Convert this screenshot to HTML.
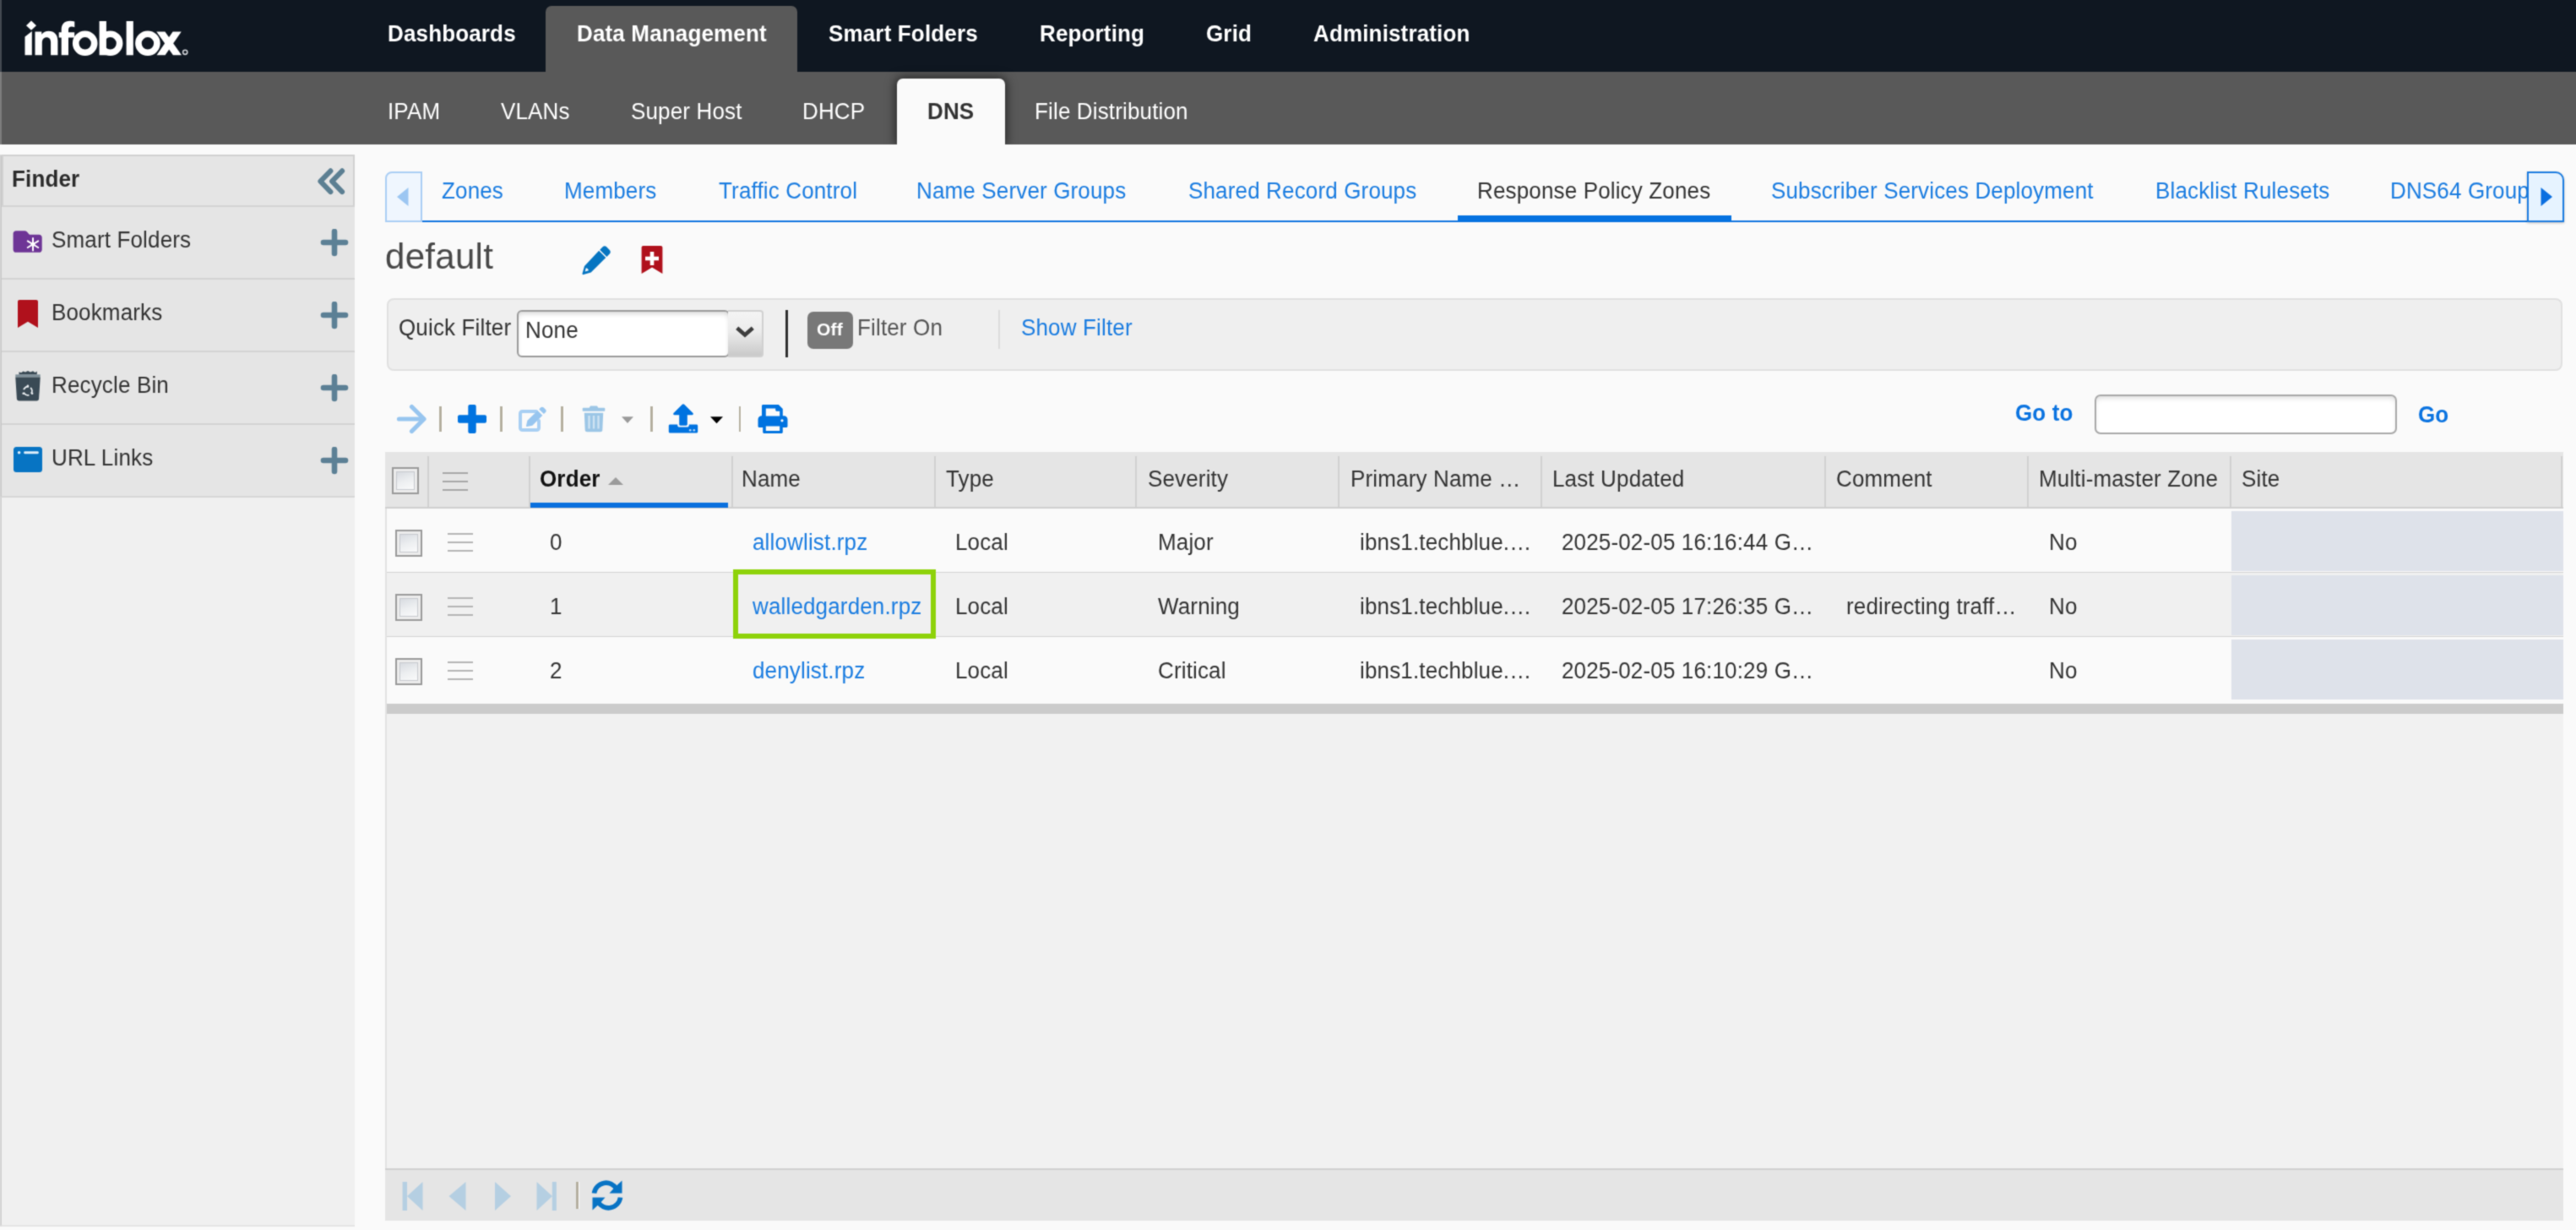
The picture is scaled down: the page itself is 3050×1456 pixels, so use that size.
<!DOCTYPE html>
<html>
<head>
<meta charset="utf-8">
<title>Infoblox - Response Policy Zones</title>
<style>
*{box-sizing:border-box;margin:0;padding:0}
html,body{width:3050px;height:1456px;overflow:hidden;background:#fafafa}
body{position:relative;font-family:"Liberation Sans",sans-serif;font-size:26px;line-height:30px;color:#333}
#wrap{position:absolute;left:0;top:0;width:3050px;height:1456px;filter:url(#soft);background:#fafafa}
.a{position:absolute}
.t{position:absolute;white-space:nowrap;font-size:26px;line-height:30px;transform:scaleY(1.09);transform-origin:0 24px;letter-spacing:.15px}
.b{font-weight:bold}
.w{color:#fff}
.lk{color:#1a7ce0}
#topbar{left:-20px;top:-20px;width:3090px;height:105px;background:#0f1721}
#subbar{left:-20px;top:85px;width:3090px;height:86px;background:#595959}
#edge{left:-20px;top:-20px;width:22px;height:191px;background:rgba(255,255,255,.22)}
#dmtab{left:646px;top:7px;width:298px;height:80px;background:#595959;border-radius:7px 7px 0 0}
#dnstab{left:1062px;top:93px;width:128px;height:78px;background:#fafafa;border-radius:7px 7px 0 0;box-shadow:0 0 12px 2px rgba(0,0,0,.55)}
#dnsmask{left:1030px;top:171px;width:200px;height:18px;background:#fafafa}
/* sidebar */
#side{left:0;top:183px;width:420px;height:1269px;background:#f0f0f0;border-left:2px solid #d0d0d0;border-bottom:2px solid #e4e4e4}
#sidelist{left:0;top:183px;width:420px;height:406px;background:#e5e5e5;border:2px solid #d6d6d6;border-left:2px solid #c9c9c9;border-right:none}
#fhead{left:2px;top:183px;width:418px;height:62px;border:2px solid #d1d1d1}
.sl{left:2px;width:418px;height:2px;background:#d3d3d3}
/* tabs */
#tabline{left:457px;top:261px;width:2578px;height:2px;background:#0d72df}
#tabact{left:1726px;top:255px;width:324px;height:7px;background:#0572e0}
#scl{left:456px;top:203px;width:44px;height:60px;background:#eff6fe;border:2px solid #a9cdf4;border-radius:8px 0 0 0}
#scr{left:2992px;top:203px;width:44px;height:60px;background:#e6f3ff;border:2px solid #1a7be0;border-radius:0 10px 0 0;box-shadow:0 1px 3px rgba(0,0,0,.25)}
/* filter */
#filter{left:458px;top:353px;width:2576px;height:86px;background:#efefef;border:2px solid #e0e0e0;border-radius:8px}
#sel{left:612px;top:367px;width:252px;height:56px;background:#fff;border:2px solid #9a9a9a;border-radius:6px;box-shadow:inset 0 4px 6px -2px rgba(0,0,0,.18)}
#selbtn{left:862px;top:367px;width:42px;height:56px;background:linear-gradient(#f4f4f4 0%,#ececec 45%,#c9c9c9 100%);border:2px solid #d0d0d0;border-left:none;border-radius:0 4px 4px 0}
#vsep{left:930px;top:367px;width:2.500px;height:56px;background:#2e2e2e}
#off{left:956px;top:369px;width:54px;height:44px;background:#787878;border-radius:7px}
#tsep{left:1182px;top:367px;width:2px;height:46px;background:#dcdcdc}
/* toolbar */
.ts{top:481px;width:3px;height:30px;background:#b4af9f;box-shadow:1px 0 0 #fff}
#goin{left:2480px;top:467px;width:358px;height:47px;background:#fff;border:2px solid #a8a8a8;border-radius:7px;box-shadow:inset 0 4px 6px -2px rgba(0,0,0,.15)}
/* grid */
#gridbox{left:456px;top:535px;width:2579px;height:910px;background:#f1f1f1;border-left:2px solid #e2e2e2}
#ghead{left:456px;top:535px;width:2579px;height:67px;background:#e5e5e5;border-bottom:2px solid #cfcfcf}
.cs{top:540px;width:2px;height:61px;background:#d0d0d0}
.row{left:458px;width:2577px;height:76px}
.r0{background:#fafafa}
.r1{background:#f0f0f0}
.rl{left:458px;width:2577px;height:2px;background:#d2d2d2}
.site{left:2642px;width:393px;height:71px;background:#dee2ea}
.cb{width:32px;height:32px;border:2px solid #999;background:linear-gradient(160deg,#cfd3da 0%,#eceef0 50%,#ffffff 100%);box-shadow:inset 0 0 0 3px #ececec,inset 0 0 0 4px #c6c9ce}
.hb{width:30px;height:2px;background:#b4b4b4}
#hscroll{left:458px;top:833px;width:2577px;height:12px;background:#cbcbcb}
#pager{left:456px;top:1383px;width:2579px;height:62px;background:#e5e5e5;border-top:2px solid #cfcfcf}
#green{left:868px;top:674px;width:240px;height:82px;border:6px solid #8ed20a}
</style>
</head>
<body>
<svg width="0" height="0" style="position:absolute"><defs><filter id="soft" filterUnits="userSpaceOnUse" x="-20" y="-20" width="3090" height="1496" color-interpolation-filters="sRGB"><feConvolveMatrix order="3" kernelMatrix="1 4 1 4 16 4 1 4 1" divisor="36" edgeMode="duplicate" preserveAlpha="true"/></filter></defs></svg>
<div id="wrap">
<div class="a" style="left:-20px;top:-20px;width:3090px;height:1496px;background:#fafafa"></div>
<!-- ===== top bars ===== -->
<div class="a" id="topbar"></div>
<div class="a" id="subbar"></div>
<div class="a" id="dmtab"></div>
<div class="a" id="edge"></div>
<div class="a" id="dnstab"></div>
<div class="a" id="dnsmask"></div>

<svg class="a" style="left:0;top:0" width="240" height="85" viewBox="0 0 240 85">
<defs><clipPath id="bclip"><rect x="119" y="30" width="40" height="40"/></clipPath></defs>
<g fill="#fff">
<polygon points="37,24.6 43,30.2 37,35.8 31,30.2"/>
<polygon points="29.5,65.3 29.5,43.5 37.8,37 37.8,65.3"/>
<path d="M41.5 65.3V37.6h7.8v3.2c2-2.6 4.8-4 8.3-4 6.8 0 10.8 4.4 10.8 11.8v16.7h-8.3V50.2c0-3.8-1.7-6-4.9-6-3.3 0-5.4 2.3-5.4 6.3v14.8z"/>
<path d="M72.7 65.3V44.6h-3v-6.4h3v-3.1c0-6.6 3.6-10.4 10.1-10.4 2 0 3.8 0.3 5.5 0.9v6.6c-1.2-0.4-2.3-0.6-3.5-0.6-2.6 0-3.8 1.3-3.8 4v2.6h7.2v6.4h-7.2v20.7z"/>
<rect x="117.6" y="25" width="8.3" height="40.3"/>
<rect x="149.6" y="25" width="8.2" height="40.3"/>
<polygon points="185.3,37.4 195.4,37.4 215,65.3 204.9,65.3"/>
<polygon points="204.6,37.4 214.7,37.4 195.6,65.3 185.5,65.3"/>
</g>
<g fill="none" stroke="#fff" stroke-width="7.6">
<circle cx="100.7" cy="51.3" r="11"/>
<circle cx="130.6" cy="51.3" r="11" clip-path="url(#bclip)"/>
<circle cx="174.9" cy="51.3" r="11"/>
</g>
<circle cx="219.2" cy="61.8" r="2.6" fill="none" stroke="#cfd2d6" stroke-width="1.6"/>
</svg>

<div class="t b w" style="left:459px;top:25px">Dashboards</div>
<div class="t b w" style="left:683px;top:25px">Data Management</div>
<div class="t b w" style="left:981px;top:25px">Smart Folders</div>
<div class="t b w" style="left:1231px;top:25px">Reporting</div>
<div class="t b w" style="left:1428px;top:25px">Grid</div>
<div class="t b w" style="left:1555px;top:25px">Administration</div>

<div class="t w" style="left:459px;top:117px">IPAM</div>
<div class="t w" style="left:593px;top:117px">VLANs</div>
<div class="t w" style="left:747px;top:117px">Super Host</div>
<div class="t w" style="left:950px;top:117px">DHCP</div>
<div class="t b" style="left:1098px;top:117px;color:#333">DNS</div>
<div class="t w" style="left:1225px;top:117px">File Distribution</div>

<div class="a" id="side"></div>
<div class="a" id="sidelist"></div>
<div class="a" id="fhead"></div>
<div class="a sl" style="top:243px"></div>
<div class="a sl" style="top:329px"></div>
<div class="a sl" style="top:415px"></div>
<div class="a sl" style="top:501px"></div>
<div class="t b" style="left:14px;top:197px;color:#2b2b2b">Finder</div>
<svg class="a" style="left:374px;top:196px" width="38" height="38" viewBox="0 0 38 38"><g fill="none" stroke="#5c7f92" stroke-width="6" stroke-linecap="round" stroke-linejoin="round"><polyline points="17.400,6.300 5.400,18.700 17.400,31.100"/><polyline points="31.100,6.300 19.100,18.700 31.100,31.100"/></g></svg>
<!-- smart folders -->
<svg class="a" style="left:14px;top:271px" width="38" height="30" viewBox="0 0 38 30"><path d="M5 2.2h10.2c1 0 1.9.4 2.6 1.1l2.6 2.9c.4.4.9.6 1.500.6H32.300c1.900 0 3.400 1.500 3.400 3.400v14.200c0 1.900-1.500 3.400-3.400 3.400H5c-1.900 0-3.400-1.500-3.400-3.400V5.600C1.600 3.700 3.100 2.200 5 2.200z" fill="#6e3596"/><g stroke="#fff" stroke-width="2" stroke-linecap="round"><line x1="25" y1="11" x2="25" y2="25.500"/><line x1="18.800" y1="14.400" x2="31.200" y2="22"/><line x1="31.200" y1="14.400" x2="18.800" y2="22"/></g><circle cx="25" cy="18.200" r="2.400" fill="#fff"/></svg>
<div class="t" style="left:61px;top:269px">Smart Folders</div>
<!-- bookmarks -->
<svg class="a" style="left:18px;top:353px" width="30" height="38" viewBox="0 0 30 38"><path d="M5 2h20c1.100 0 2 .9 2 2v31l-12-7.200L3 35V4c0-1.100.9-2 2-2z" fill="#b0111c"/></svg>
<div class="t" style="left:61px;top:355px">Bookmarks</div>
<!-- recycle bin -->
<svg class="a" style="left:16px;top:436px" width="34" height="42" viewBox="0 0 34 42"><path d="M6.5 7.5V4.2l2.500 1 2.500-1.800 2.500 1.200 3-1.600 3 1.400 3-1.200 2.500 1.800 2.300-1.400v3.900z" fill="#3a4a55"/><rect x="2.300" y="7.300" width="29.400" height="3.200" fill="#7f909a"/><path d="M2.300 10.400h29.400l-1.600 25.500c-.1 1.400-1.200 2.500-2.600 2.500H6.500c-1.400 0-2.500-1.100-2.600-2.500z" fill="#3a4a55"/><circle cx="16.900" cy="26.800" r="5" fill="none" stroke="#e8ecef" stroke-width="1.900" stroke-dasharray="7.400 3.070" transform="rotate(-50 16.900 26.800)"/><g fill="#e8ecef"><circle cx="16.900" cy="20.800" r="1.300"/><circle cx="11.700" cy="29.800" r="1.300"/><circle cx="22.100" cy="29.800" r="1.300"/></g></svg>
<div class="t" style="left:61px;top:441px">Recycle Bin</div>
<!-- url links -->
<svg class="a" style="left:14px;top:527px" width="38" height="34" viewBox="0 0 38 34"><rect x="2" y="2" width="34" height="30" rx="3.500" fill="#0774c3"/><circle cx="8.600" cy="8.800" r="1.800" fill="#dfeefa"/><rect x="14.300" y="7.300" width="17.400" height="3" rx="1" fill="#dfeefa"/></svg>
<div class="t" style="left:61px;top:527px">URL Links</div>
<svg class="a" style="left:378px;top:271px" width="36" height="34" viewBox="0 0 36 34"><g stroke="#5c8095" stroke-width="6.600" stroke-linecap="round"><line x1="5" y1="16" x2="31" y2="16"/><line x1="18" y1="3" x2="18" y2="29"/></g></svg>
<svg class="a" style="left:378px;top:357px" width="36" height="34" viewBox="0 0 36 34"><g stroke="#5c8095" stroke-width="6.600" stroke-linecap="round"><line x1="5" y1="16" x2="31" y2="16"/><line x1="18" y1="3" x2="18" y2="29"/></g></svg>
<svg class="a" style="left:378px;top:443px" width="36" height="34" viewBox="0 0 36 34"><g stroke="#5c8095" stroke-width="6.600" stroke-linecap="round"><line x1="5" y1="16" x2="31" y2="16"/><line x1="18" y1="3" x2="18" y2="29"/></g></svg>
<svg class="a" style="left:378px;top:529px" width="36" height="34" viewBox="0 0 36 34"><g stroke="#5c8095" stroke-width="6.600" stroke-linecap="round"><line x1="5" y1="16" x2="31" y2="16"/><line x1="18" y1="3" x2="18" y2="29"/></g></svg>


<div class="a" id="tabline"></div>
<div class="a" id="tabact"></div>
<div class="t lk" style="left:523px;top:211px">Zones</div>
<div class="t lk" style="left:668px;top:211px">Members</div>
<div class="t lk" style="left:851px;top:211px">Traffic Control</div>
<div class="t lk" style="left:1085px;top:211px">Name Server Groups</div>
<div class="t lk" style="left:1407px;top:211px">Shared Record Groups</div>
<div class="t" style="left:1749px;top:211px;color:#333">Response Policy Zones</div>
<div class="t lk" style="left:2097px;top:211px">Subscriber Services Deployment</div>
<div class="t lk" style="left:2552px;top:211px">Blacklist Rulesets</div>
<div class="t lk" style="left:2830px;top:211px">DNS64 Groups</div>
<div class="a" id="scl"><svg class="a" style="left:11px;top:15px" width="16" height="26" viewBox="0 0 16 26"><polygon points="14.500,2 14.500,24 1,13" fill="#9cc6f2"/></svg></div>
<div class="a" id="scr"><svg class="a" style="left:13px;top:15px" width="16" height="26" viewBox="0 0 16 26"><polygon points="1.500,2 1.500,24 15,13" fill="#0a6ee0"/></svg></div>


<div class="t" style="left:456px;top:280px;font-size:42px;line-height:48px;color:#484848;transform:none;letter-spacing:.3px">default</div>
<svg class="a" style="left:687px;top:288px" width="40" height="40" viewBox="0 0 40 40"><g fill="#0675c1"><path d="M26.600 4.300c1.300-1.300 3.300-1.300 4.600 0l3.600 3.600c1.300 1.300 1.300 3.300 0 4.600l-3.400 3.400-8.200-8.200z"/><path d="M22.100 8.800l8.200 8.200L12.700 34.600l-8.900 2.500c-.8.200-1.500-.5-1.300-1.300l2.500-8.900z"/></g><path d="M6.800 29.200c1.600.2 2.900 1.500 3.100 3.100l-4.300 1.200z" fill="#f2f7fb"/></svg>
<svg class="a" style="left:758px;top:289px" width="28" height="37" viewBox="0 0 28 37"><path d="M3.600 2h20.800c1.100 0 2 .9 2 2v31l-12.400-7.500L1.600 35V4c0-1.100.9-2 2-2z" fill="#b0111c"/><g stroke="#fff" stroke-width="4.600"><line x1="6" y1="17" x2="22" y2="17"/><line x1="14" y1="9" x2="14" y2="25"/></g></svg>


<div class="a" id="filter"></div>
<div class="t" style="left:472px;top:373px">Quick Filter</div>
<div class="a" id="sel"></div>
<div class="a" id="selbtn"><svg class="a" style="left:8px;top:16px" width="24" height="16" viewBox="0 0 24 16"><polyline points="2.700,3.200 12,11.400 21.300,3.200" fill="none" stroke="#3d3d3d" stroke-width="4.700"/></svg></div>
<div class="t" style="left:622px;top:376px">None</div>
<div class="a" id="vsep"></div>
<div class="a" id="off"></div>
<div class="t b w" style="left:967px;top:377px;font-size:21px;line-height:26px;transform:none">Off</div>
<div class="t" style="left:1015px;top:373px;color:#555">Filter On</div>
<div class="a" id="tsep"></div>
<div class="t lk" style="left:1209px;top:373px">Show Filter</div>


<svg class="a" style="left:468px;top:477px" width="38" height="38" viewBox="0 0 38 38"><g fill="none" stroke="#97c5ef" stroke-width="5.200" stroke-linecap="round" stroke-linejoin="round"><line x1="4.500" y1="19" x2="33" y2="19"/><polyline points="19.500,4.500 34,19 19.500,33.500"/></g></svg>
<div class="a ts" style="left:520px"></div>
<svg class="a" style="left:540px;top:477px" width="38" height="38" viewBox="0 0 38 38"><g fill="#0073e0"><rect x="2" y="14.300" width="34" height="9.400" rx="2"/><rect x="14.300" y="2" width="9.400" height="34" rx="2"/></g></svg>
<div class="a ts" style="left:592px"></div>
<svg class="a" style="left:612px;top:478px" width="38" height="36" viewBox="0 0 38 36"><path d="M23 9H6.500C5.100 9 4 10.100 4 11.500v17C4 29.900 5.100 31 6.500 31h17c1.400 0 2.500-1.100 2.500-2.500V20" fill="none" stroke="#a8cff3" stroke-width="4" stroke-linecap="round"/><g fill="#97c5ef"><path d="M28.300 4.300c.9-.9 2.300-.9 3.200 0l2.500 2.500c.9.900.9 2.300 0 3.200l-2.100 2.100-5.700-5.700z"/><path d="M24.600 8l5.700 5.700-12 12-6.300 1.400c-.6.100-1.100-.4-1-1l1.400-6.300z"/></g></svg>
<div class="a ts" style="left:664px"></div>
<svg class="a" style="left:688px;top:478px" width="30" height="36" viewBox="0 0 30 36"><g fill="#9cc6e6"><path d="M11 2.500h8l1.300 2.200h7.200c.500 0 .8.300.8.800v2.400c0 .5-.3.800-.8.800H2.500c-.5 0-.8-.3-.8-.8V5.500c0-.5.300-.8.800-.8h7.200z"/><path d="M3.800 10.700h22.400l-.9 20.300c-.1 1.300-1.100 2.300-2.400 2.300H7.100c-1.300 0-2.300-1-2.400-2.300z"/></g><g stroke="#cfe3f3" stroke-width="2.300"><line x1="9.500" y1="14" x2="9.500" y2="29.500"/><line x1="15" y1="14" x2="15" y2="29.500"/><line x1="20.500" y1="14" x2="20.500" y2="29.500"/></g></svg>
<svg class="a" style="left:735px;top:492px" width="16" height="10" viewBox="0 0 16 10"><polygon points="1,1.300 15,1.300 8,9" fill="#9a9a9a"/></svg>
<div class="a ts" style="left:770px"></div>
<svg class="a" style="left:790px;top:477px" width="38" height="38" viewBox="0 0 38 38"><g fill="#0073e0"><path d="M19 1.3c.5 0 .9.2 1.2.5l10.3 10.3c.8.8.2 2.1-.9 2.1h-5.8v11.4c0 .7-.5 1.2-1.2 1.2h-7.2c-.7 0-1.2-.5-1.2-1.2V14.200H8.400c-1.100 0-1.700-1.300-.9-2.100L17.800 1.800c.3-.3.700-.5 1.200-.5z"/><path d="M3.300 25.600h8.900v.8c0 1.200 1 2.200 2.200 2.200h9.200c1.200 0 2.200-1 2.200-2.200v-.8h8.900c.8 0 1.500.7 1.500 1.500v7c0 .8-.7 1.500-1.500 1.500H3.300c-.8 0-1.500-.7-1.500-1.500v-7c0-.8.700-1.500 1.500-1.500z"/></g><circle cx="27.200" cy="32.300" r="1.300" fill="#bcd9f7"/><circle cx="31.800" cy="32.300" r="1.300" fill="#bcd9f7"/></svg>
<svg class="a" style="left:840px;top:492px" width="17" height="10" viewBox="0 0 17 10"><polygon points="1,1.300 16,1.300 8.500,9.300" fill="#000"/></svg>
<div class="a ts" style="left:875px;width:2px"></div>
<svg class="a" style="left:896px;top:477px" width="38" height="38" viewBox="0 0 38 38"><path fill="#0073e0" fill-rule="evenodd" d="M7.500 2h18.300l5 5v8.300h1.500c2.300 0 4.200 1.900 4.200 4.200v8c0 .8-.7 1.500-1.500 1.500h-4.200v5.500c0 .8-.7 1.500-1.500 1.500H8.700c-.8 0-1.500-.7-1.500-1.500V29H3c-.8 0-1.500-.7-1.500-1.500v-8c0-2.300 1.900-4.200 4.200-4.200h.3V3.500C6 2.700 6.700 2 7.500 2zM10.800 6.500v9h16.400V9.800h-3.500c-.8 0-1.500-.7-1.500-1.500V6.500zM10.800 27.500v5.500h16.400v-5.500zM30 19.200a1.600 1.600 0 1 0 0 3.200 1.600 1.600 0 0 0 0-3.200z"/></svg>
<div class="t b" style="left:2386px;top:474px;color:#0a73e0">Go to</div>
<div class="a" id="goin"></div>
<div class="t b" style="left:2863px;top:476px;color:#0a73e0">Go</div>


<div class="a" id="gridbox"></div>
<div class="a" id="ghead"></div>
<div class="a cs" style="left:506px"></div>
<div class="a cs" style="left:626px"></div>
<div class="a cs" style="left:866px"></div>
<div class="a cs" style="left:1106px"></div>
<div class="a cs" style="left:1344px"></div>
<div class="a cs" style="left:1584px"></div>
<div class="a cs" style="left:1824px"></div>
<div class="a cs" style="left:2160px"></div>
<div class="a cs" style="left:2400px"></div>
<div class="a cs" style="left:2640px"></div>
<div class="a cs" style="left:3032px"></div>
<div class="a" style="left:628px;top:595px;width:234px;height:6px;background:#0a70de"></div>
<div class="a cb" style="left:464px;top:553px"></div>
<div class="a hb" style="left:524px;top:559px;background:#a6a6a6"></div>
<div class="a hb" style="left:524px;top:569px;background:#a6a6a6"></div>
<div class="a hb" style="left:524px;top:579px;background:#a6a6a6"></div>
<div class="t b" style="left:639px;top:552px;color:#111">Order</div>
<div class="t" style="left:878px;top:552px">Name</div>
<div class="t" style="left:1120px;top:552px">Type</div>
<div class="t" style="left:1359px;top:552px">Severity</div>
<div class="t" style="left:1599px;top:552px">Primary Name …</div>
<div class="t" style="left:1838px;top:552px">Last Updated</div>
<div class="t" style="left:2174px;top:552px">Comment</div>
<div class="t" style="left:2414px;top:552px">Multi-master Zone</div>
<div class="t" style="left:2654px;top:552px">Site</div>
<svg class="a" style="left:719px;top:564px" width="20" height="11" viewBox="0 0 20 11"><polygon points="1,10 10,1 19,10" fill="#9b9b9b"/></svg>
<div class="a row r0" style="top:602px"></div>
<div class="a site" style="top:605px"></div>
<div class="a rl" style="top:677px"></div>
<div class="a cb" style="left:468px;top:627px"></div>
<div class="a hb" style="left:530px;top:631px"></div>
<div class="a hb" style="left:530px;top:641px"></div>
<div class="a hb" style="left:530px;top:651px"></div>
<div class="t" style="left:651px;top:627px">0</div>
<div class="t lk" style="left:891px;top:627px">allowlist.rpz</div>
<div class="t" style="left:1131px;top:627px">Local</div>
<div class="t" style="left:1371px;top:627px">Major</div>
<div class="t" style="left:1610px;top:627px">ibns1.techblue.…</div>
<div class="t" style="left:1849px;top:627px">2025-02-05 16:16:44 G…</div>
<div class="t" style="left:2426px;top:627px">No</div>
<div class="a row r1" style="top:678px"></div>
<div class="a site" style="top:681px"></div>
<div class="a rl" style="top:753px"></div>
<div class="a cb" style="left:468px;top:703px"></div>
<div class="a hb" style="left:530px;top:707px"></div>
<div class="a hb" style="left:530px;top:717px"></div>
<div class="a hb" style="left:530px;top:727px"></div>
<div class="t" style="left:651px;top:703px">1</div>
<div class="t lk" style="left:891px;top:703px">walledgarden.rpz</div>
<div class="t" style="left:1131px;top:703px">Local</div>
<div class="t" style="left:1371px;top:703px">Warning</div>
<div class="t" style="left:1610px;top:703px">ibns1.techblue.…</div>
<div class="t" style="left:1849px;top:703px">2025-02-05 17:26:35 G…</div>
<div class="t" style="left:2186px;top:703px">redirecting traff…</div>
<div class="t" style="left:2426px;top:703px">No</div>
<div class="a row r0" style="top:754px;height:80px"></div>
<div class="a site" style="top:757px"></div>
<div class="a cb" style="left:468px;top:779px"></div>
<div class="a hb" style="left:530px;top:783px"></div>
<div class="a hb" style="left:530px;top:793px"></div>
<div class="a hb" style="left:530px;top:803px"></div>
<div class="t" style="left:651px;top:779px">2</div>
<div class="t lk" style="left:891px;top:779px">denylist.rpz</div>
<div class="t" style="left:1131px;top:779px">Local</div>
<div class="t" style="left:1371px;top:779px">Critical</div>
<div class="t" style="left:1610px;top:779px">ibns1.techblue.…</div>
<div class="t" style="left:1849px;top:779px">2025-02-05 16:10:29 G…</div>
<div class="t" style="left:2426px;top:779px">No</div>
<div class="a" id="hscroll"></div>
<div class="a" id="green"></div>


<div class="a" id="pager"></div>
<svg class="a" style="left:474px;top:1397px" width="190" height="38" viewBox="0 0 190 38"><g fill="#b5cfe2"><rect x="2.600" y="2" width="5.400" height="34"/><polygon points="26.500,2 26.500,36 8,19"/><polygon points="77.500,2 77.500,36 57.500,19"/><polygon points="112,2 112,36 131,19"/><polygon points="161.500,2 161.500,36 180,19"/><rect x="179.800" y="2" width="5" height="34"/></g></svg>
<div class="a" style="left:682px;top:1399px;width:3px;height:32px;background:#b4af9f;box-shadow:1px 0 0 #fff"></div>
<svg class="a" style="left:698px;top:1395px" width="42" height="40" viewBox="0 0 42 40"><g fill="none" stroke="#0873c4" stroke-width="5.600"><path d="M5.500 17.500A14.200 14.200 0 0 1 32 12.500"/><path d="M36.500 22.500A14.200 14.200 0 0 1 10 27.500"/></g><g fill="#0873c4"><polygon points="38.500,2.500 38.500,17.500 23.500,17.500 27.500,13 32,8.500"/><polygon points="3.500,37.500 3.500,22.500 18.500,22.500 14.500,27 10,31.500"/></g></svg>


</div>
</body>
</html>
